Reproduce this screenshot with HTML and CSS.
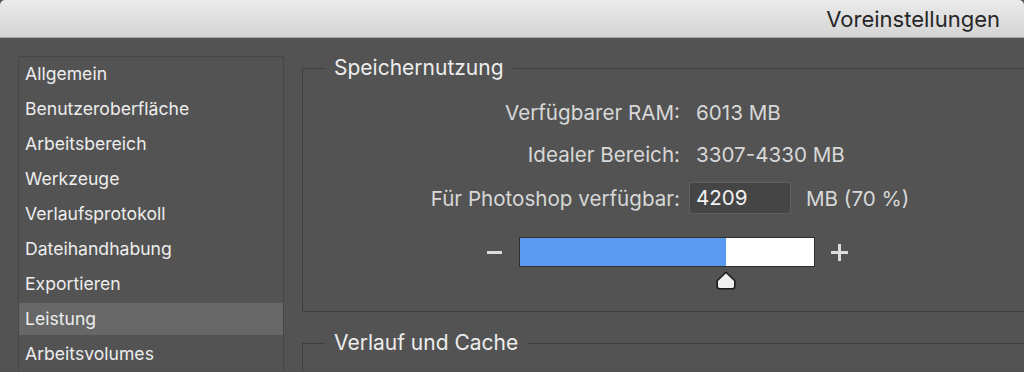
FILE: index.html
```html
<!DOCTYPE html>
<html lang="de">
<head>
<meta charset="utf-8">
<title>Voreinstellungen</title>
<link rel="stylesheet" href="styles.css">
</head>
<body>
<div class="window">
  <header class="titlebar"><span class="title">Voreinstellungen</span></header>
  <div class="main">
    <nav class="sidebar">
      <div class="item">Allgemein</div>
      <div class="item">Benutzeroberfläche</div>
      <div class="item">Arbeitsbereich</div>
      <div class="item">Werkzeuge</div>
      <div class="item">Verlaufsprotokoll</div>
      <div class="item">Dateihandhabung</div>
      <div class="item">Exportieren</div>
      <div class="item selected">Leistung</div>
      <div class="item">Arbeitsvolumes</div>
    </nav>
    <div class="content">
      <fieldset class="group memory">
        <legend>Speichernutzung</legend>
        <div class="rows">
          <div class="label">Verfügbarer RAM:</div>
          <div class="value">6013 MB</div>
          <div class="label">Idealer Bereich:</div>
          <div class="value">3307-4330 MB</div>
          <div class="label">Für Photoshop verfügbar:</div>
          <div class="value inputrow"><span class="field">4209</span><span class="unit">MB (70 %)</span></div>
        </div>
        <div class="slider">
          <span class="minus"></span>
          <div class="track">
            <div class="fill" style="width:70%"></div>
            <span class="thumb" style="left:70%">
              <svg width="20" height="19" viewBox="0 0 20 19"><path d="M10 1.2 L18.8 9.8 L18.8 15.3 Q18.8 17.8 16.3 17.8 L3.7 17.8 Q1.2 17.8 1.2 15.3 L1.2 9.8 Z" fill="#efefef" stroke="#1c1c1c" stroke-width="1.6" stroke-linejoin="round"/></svg>
            </span>
          </div>
          <span class="plus"></span>
        </div>
      </fieldset>
      <fieldset class="group cache">
        <legend>Verlauf und Cache</legend>
      </fieldset>
    </div>
  </div>
</div>
</body>
</html>
```
FILE: styles.css
```css
html, body {
  margin: 0;
  padding: 0;
  height: 372px;
  overflow: hidden;
  background: #535353;
  font-family: Inter, "Liberation Sans", sans-serif;
}
.window {
  height: 372px;
  display: flex;
  flex-direction: column;
  overflow: hidden;
}
.titlebar {
  height: 37px;
  flex: none;
  background: linear-gradient(#ebebeb, #d4d4d4);
  border-bottom: 1px solid #a9a9a9;
  border-radius: 5px 5px 0 0;
  display: flex;
  align-items: center;
  justify-content: flex-end;
  padding-right: 24px;
}
.title {
  font-size: 22px;
  color: #262626;
}
.main {
  display: flex;
  padding: 18px 0 0 18px;
  gap: 18px;
  flex: 1;
  min-height: 0;
  overflow: hidden;
}
.sidebar {
  width: 264px;
  flex: none;
  border: 1px solid #474747;
  border-bottom: none;
  padding-top: 1px;
  height: 400px;
}
.item {
  height: 32px;
  margin-bottom: 3px;
  line-height: 32px;
  padding-left: 6px;
  font-size: 17.6px;
  color: #ededed;
}
.item.selected {
  background: #676767;
}
.content {
  flex: 1;
  margin-right: -40px;
  display: flex;
  flex-direction: column;
}
.group {
  margin: 0;
  padding: 0;
  border: 1px solid #3e3e3e;
  min-width: 0;
}
.group legend {
  margin-left: 22px;
  padding: 0 9px;
  font-size: 21px;
  line-height: 24px;
  color: #ededed;
}
.memory {
  height: 254px;
  flex: none;
}
.cache {
  margin-top: 19px;
  height: 60px;
  flex: none;
}
.rows {
  display: grid;
  grid-template-columns: 377px auto;
  grid-template-rows: 40px 44px 44px;
  column-gap: 9px;
  margin-top: 12px;
  align-items: center;
  font-size: 20.6px;
  color: #d8d8d8;
}
.label {
  text-align: right;
}
.value {
  padding-left: 7px;
}
.inputrow {
  padding-left: 0;
  display: flex;
  align-items: center;
  gap: 15px;
}
.field {
  width: 94px;
  height: 30px;
  line-height: 30px;
  padding-left: 6px;
  background: #454545;
  border: 1px solid #5f5f5f;
  color: #f2f2f2;
  box-sizing: content-box;
}
.slider {
  display: flex;
  align-items: center;
  padding-left: 184px;
  margin-top: 17px;
  height: 30px;
}
.minus {
  width: 15px;
  height: 3px;
  background: #dcdcdc;
  margin-right: 17px;
}
.track {
  position: relative;
  width: 294px;
  height: 28px;
  background: #ffffff;
  border: 1px solid #2f2f2f;
}
.fill {
  height: 100%;
  background: #5a9af0;
}
.thumb {
  position: absolute;
  top: 33px;
  margin-left: -10px;
  width: 20px;
  height: 19px;
}
.thumb svg {
  display: block;
}
.plus {
  position: relative;
  width: 17px;
  height: 17px;
  margin-left: 16px;
}
.plus::before, .plus::after {
  content: "";
  position: absolute;
  background: #dcdcdc;
}
.plus::before {
  left: 0;
  top: 7px;
  width: 17px;
  height: 3px;
}
.plus::after {
  left: 7px;
  top: 0;
  width: 3px;
  height: 17px;
}
```
